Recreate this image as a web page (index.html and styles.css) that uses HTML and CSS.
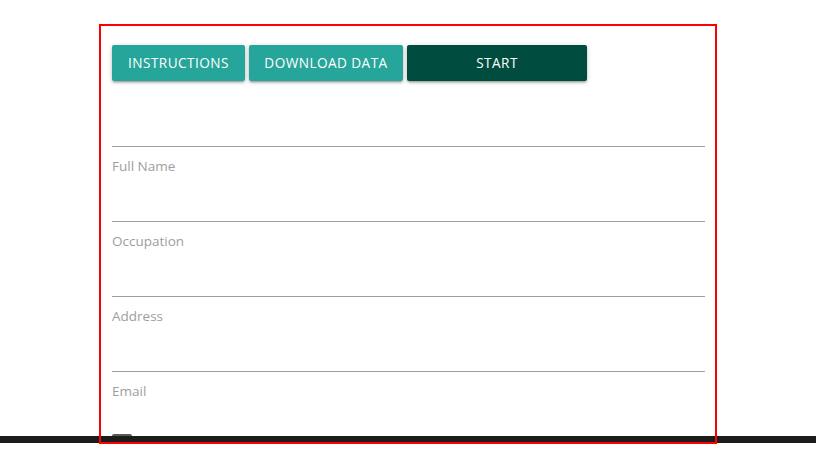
FILE: index.html
```html
<!DOCTYPE html>
<html lang="en">
<head>
<meta charset="utf-8">
<title>Form</title>
<link rel="stylesheet" href="styles.css">
</head>
<body>
<div class="page">
  <div class="box">
    <div class="actions">
      <button class="btn btn-light btn-instr">Instructions</button>
      <button class="btn btn-light btn-dl">Download Data</button>
      <button class="btn btn-dark btn-start">Start</button>
    </div>
    <div class="field field-first"></div>
    <div class="field"><div class="label">Full Name</div></div>
    <div class="field"><div class="label">Occupation</div></div>
    <div class="field"><div class="label">Address</div></div>
    <div class="field field-last">
      <div class="label">Email</div>
      <div class="check"></div>
    </div>
  </div>
</div>
<div class="bottom-bar"></div>
</body>
</html>
```
FILE: styles.css
```css
html, body {
  margin: 0;
  padding: 0;
  background: #fff;
  font-family: "Open Sans", "Noto Sans", sans-serif;
  overflow: hidden;
  height: 469px;
}
.page {
  padding-top: 24px;
  padding-left: 99px;
}
.box {
  position: relative;
  box-sizing: border-box;
  width: 618px;
  height: 420px;
  padding: 21px 12px 0 13px;
  overflow: hidden;
}
.box::after {
  content: "";
  position: absolute;
  inset: 0;
  border: 2px solid #ff0000;
  z-index: 3;
  pointer-events: none;
}
.actions {
  display: flex;
  gap: 4px;
}
.btn {
  height: 36px;
  border: 0;
  border-radius: 2px;
  padding: 0 0 2px;
  font-family: inherit;
  font-size: 13.6px;
  letter-spacing: 0.45px;
  text-transform: uppercase;
  color: #fff;
  box-shadow: 0 2px 2px rgba(0,0,0,.14), 0 3px 1px -2px rgba(0,0,0,.12), 0 1px 5px rgba(0,0,0,.2);
}
.btn-light { background: #26a69a; }
.btn-dark { background: #004d40; }
.btn-instr { width: 133px; }
.btn-dl { width: 154px; }
.btn-start { width: 180px; }
.field {
  box-sizing: border-box;
  height: 75px;
  border-bottom: 1px solid #a0a0a0;
  padding-top: 10px;
}
.field-first {
  height: 66px;
  padding-top: 0;
}
.field-last {
  border-bottom: 0;
}
.label {
  font-size: 13.5px;
  line-height: 19px;
  color: #9e9e9e;
}
.check {
  margin-top: 33px;
  width: 20px;
  height: 20px;
  border-radius: 2px;
  background: #5a5a5a;
}
.bottom-bar {
  position: fixed;
  left: 0;
  right: 0;
  top: 436px;
  height: 7px;
  background: #1c1c1c;
  z-index: 2;
}
```
